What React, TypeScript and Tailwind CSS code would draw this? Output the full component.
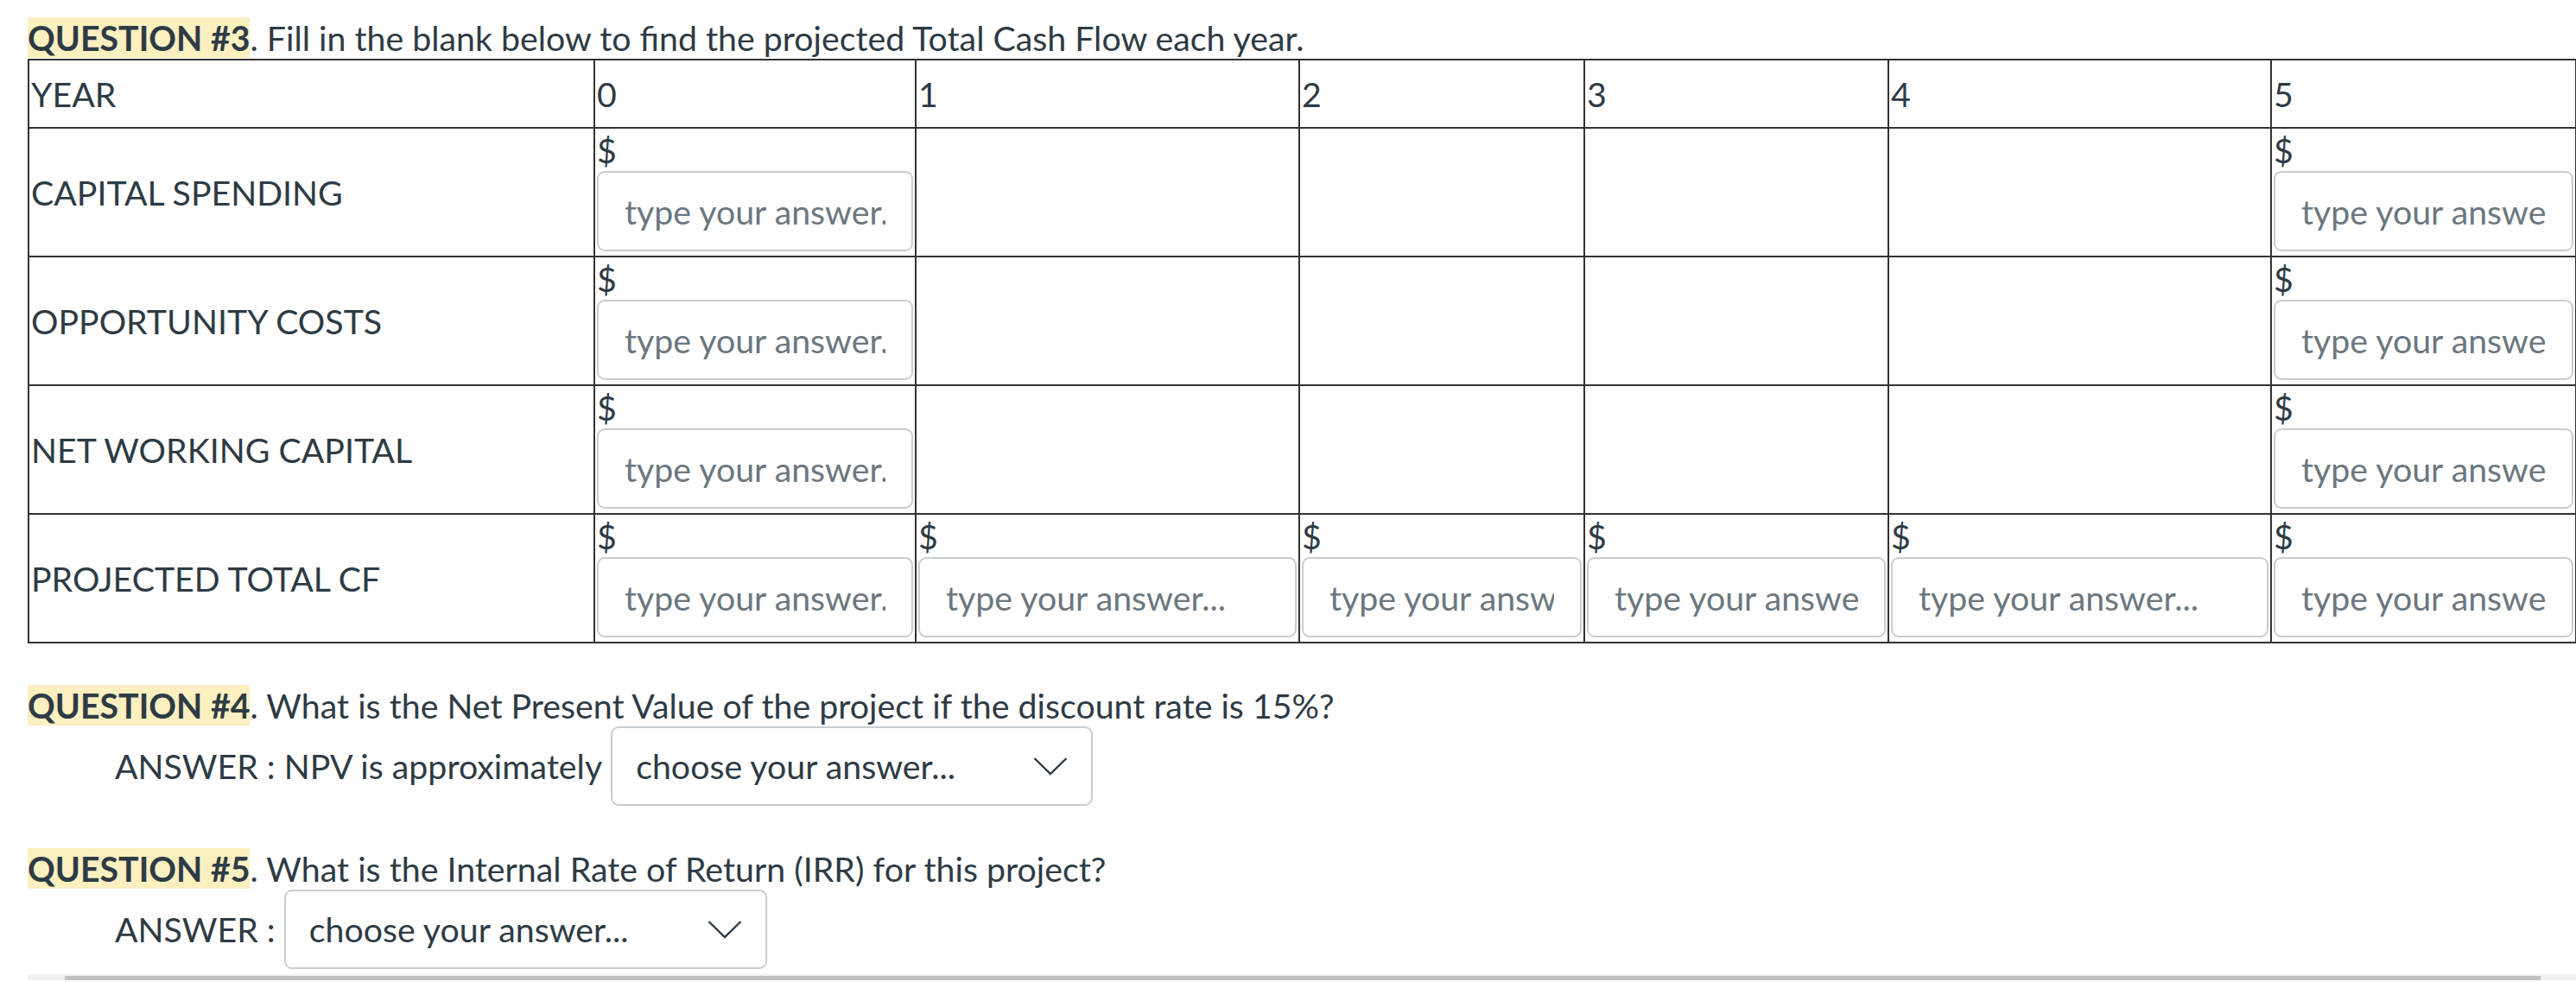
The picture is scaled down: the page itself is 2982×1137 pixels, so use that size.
import React from "react";

function Chevron() {
  return (
    <svg width="40" height="22" viewBox="0 0 40 22" fill="none" aria-hidden="true">
      <polyline points="1.5,2 20,20 38.5,2" stroke="#2d3b45" strokeWidth="2.4" strokeLinejoin="miter" />
    </svg>
  );
}

function AnswerInput() {
  return (
    <input
      type="text"
      placeholder="type your answer..."
      className="block w-full h-[93px] rounded-[9px] border-2 border-[#c7cdd1] bg-white px-[30px] text-[39.3px] text-[#2d3b45] placeholder:text-[#6b7780] outline-none font-['Lato',sans-serif]"
    />
  );
}

function MoneyCell() {
  return (
    <td className="border-2 border-[#333] px-[2px] pt-[1px] pb-[3px] align-top">
      <div className="leading-[48px]">$</div>
      <AnswerInput />
    </td>
  );
}

function EmptyCell() {
  return <td className="border-2 border-[#333] px-[2px]"></td>;
}

function LabelCell({ children }: { children: React.ReactNode }) {
  return <td className="border-2 border-[#333] px-[2px] align-middle leading-[48px]">{children}</td>;
}

function SelectBox({ width }: { width: string }) {
  return (
    <div
      className={`${width} h-[92px] shrink-0 rounded-[9px] border-2 border-[#c7cdd1] bg-white flex items-center justify-between pl-[27px] pr-[27px]`}
    >
      <span className="leading-[48px]">choose your answer...</span>
      <Chevron />
    </div>
  );
}

export default function App() {
  const rows: { label: string; cols: boolean[] }[] = [
    { label: "CAPITAL SPENDING", cols: [true, false, false, false, false, true] },
    { label: "OPPORTUNITY COSTS", cols: [true, false, false, false, false, true] },
    { label: "NET WORKING CAPITAL", cols: [true, false, false, false, false, true] },
    { label: "PROJECTED TOTAL CF", cols: [true, true, true, true, true, true] },
  ];

  return (
    <div className="min-h-[1137px] bg-white font-['Lato',sans-serif] text-[39.3px] text-[#2d3b45] pl-[32px]">
      <div className="pt-[20px] leading-[48px] whitespace-nowrap">
        <span className="bg-[#fcefc0] font-bold">QUESTION #3</span>. Fill in the blank below to find the projected Total Cash Flow each year.
      </div>

      <table className="table-fixed border-collapse border-2 border-[#333] w-[2949px]">
        <colgroup>
          <col className="w-[655px]" />
          <col className="w-[372px]" />
          <col className="w-[444px]" />
          <col className="w-[330px]" />
          <col className="w-[352px]" />
          <col className="w-[443px]" />
          <col className="w-[353px]" />
        </colgroup>
        <tbody>
          <tr className="h-[79px]">
            {["YEAR", "0", "1", "2", "3", "4", "5"].map((h) => (
              <td key={h} className="border-2 border-[#333] px-[2px] align-middle leading-[48px]">
                {h}
              </td>
            ))}
          </tr>
          {rows.map((r) => (
            <tr key={r.label} className="h-[149px]">
              <LabelCell>{r.label}</LabelCell>
              {r.cols.map((c, i) => (c ? <MoneyCell key={i} /> : <EmptyCell key={i} />))}
            </tr>
          ))}
        </tbody>
      </table>

      <div className="mt-[48px] leading-[48px] whitespace-nowrap">
        <span className="bg-[#fcefc0] font-bold">QUESTION #4</span>. What is the Net Present Value of the project if the discount rate is 15%?
      </div>
      <div className="flex items-center pl-[101px] whitespace-nowrap">
        <span className="leading-[48px] mr-[10px]">ANSWER : NPV is approximately</span>
        <SelectBox width="w-[558px]" />
      </div>

      <div className="mt-[49px] leading-[48px] whitespace-nowrap">
        <span className="bg-[#fcefc0] font-bold">QUESTION #5</span>. What is the Internal Rate of Return (IRR) for this project?
      </div>
      <div className="flex items-center pl-[101px] whitespace-nowrap">
        <span className="leading-[48px] mr-[10px]">ANSWER :</span>
        <SelectBox width="w-[559px]" />
      </div>

      <div className="mt-[6px] h-[7px] bg-[#f1f1f1] pt-[2px] pl-[43px] pr-[41px]">
        <div className="h-[5px] bg-[#c1c1c1]"></div>
      </div>
    </div>
  );
}
